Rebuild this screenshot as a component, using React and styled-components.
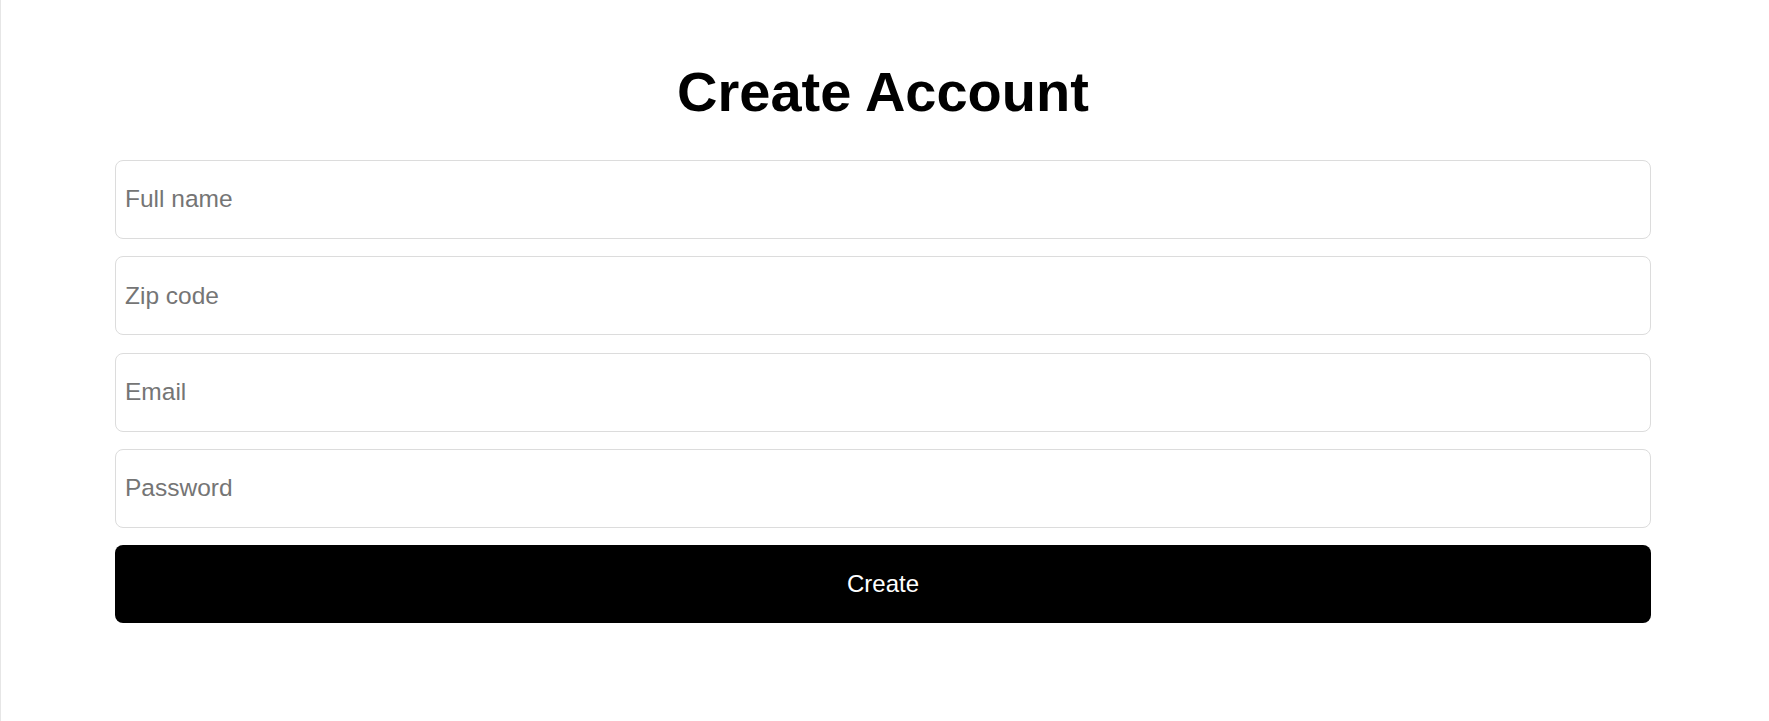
import styled, { createGlobalStyle } from "styled-components";

const GlobalStyle = createGlobalStyle`
  * {
    box-sizing: border-box;
  }
  body {
    margin: 0;
    background: #fff;
    font-family: "Liberation Sans", Arial, sans-serif;
  }
`;

const fields = [
  { name: "fullName", type: "text", placeholder: "Full name" },
  { name: "zip", type: "text", placeholder: "Zip code" },
  { name: "email", type: "email", placeholder: "Email" },
  { name: "password", type: "password", placeholder: "Password" },
];

function App() {
  const handleSubmit = (e) => {
    e.preventDefault();
  };

  return (
    <>
      <GlobalStyle />
      <Page>
        <Form onSubmit={handleSubmit}>
          <Title>Create Account</Title>
          {fields.map((f) => (
            <Input
              key={f.name}
              name={f.name}
              type={f.type}
              placeholder={f.placeholder}
            />
          ))}
          <SubmitBtn type="submit">Create</SubmitBtn>
        </Form>
      </Page>
    </>
  );
}

export default App;

const Page = styled.div`
  min-height: 100vh;
  border-left: 1px solid #e6e6e6;
  padding: 60px 118px 0 114px;
`;

const Form = styled.form`
  display: flex;
  flex-direction: column;
  gap: 17.3px;
  width: 1536px;
`;

const Title = styled.h1`
  margin: 0 0 18.7px;
  font-size: 56px;
  line-height: 64px;
  font-weight: 700;
  color: #000;
  text-align: center;
`;

const Input = styled.input`
  height: 79px;
  padding: 0 8px 0 9px;
  border: 1px solid #dcdcdc;
  border-radius: 8px;
  font-family: "Liberation Sans", Arial, sans-serif;
  font-size: 24.5px;
  color: #222;
  outline: none;

  &::placeholder {
    color: #757575;
  }
`;

const SubmitBtn = styled.button`
  height: 78px;
  border: none;
  border-radius: 8px;
  background: #000;
  color: #fff;
  font-family: "Liberation Sans", Arial, sans-serif;
  font-size: 24px;
  cursor: pointer;
`;
